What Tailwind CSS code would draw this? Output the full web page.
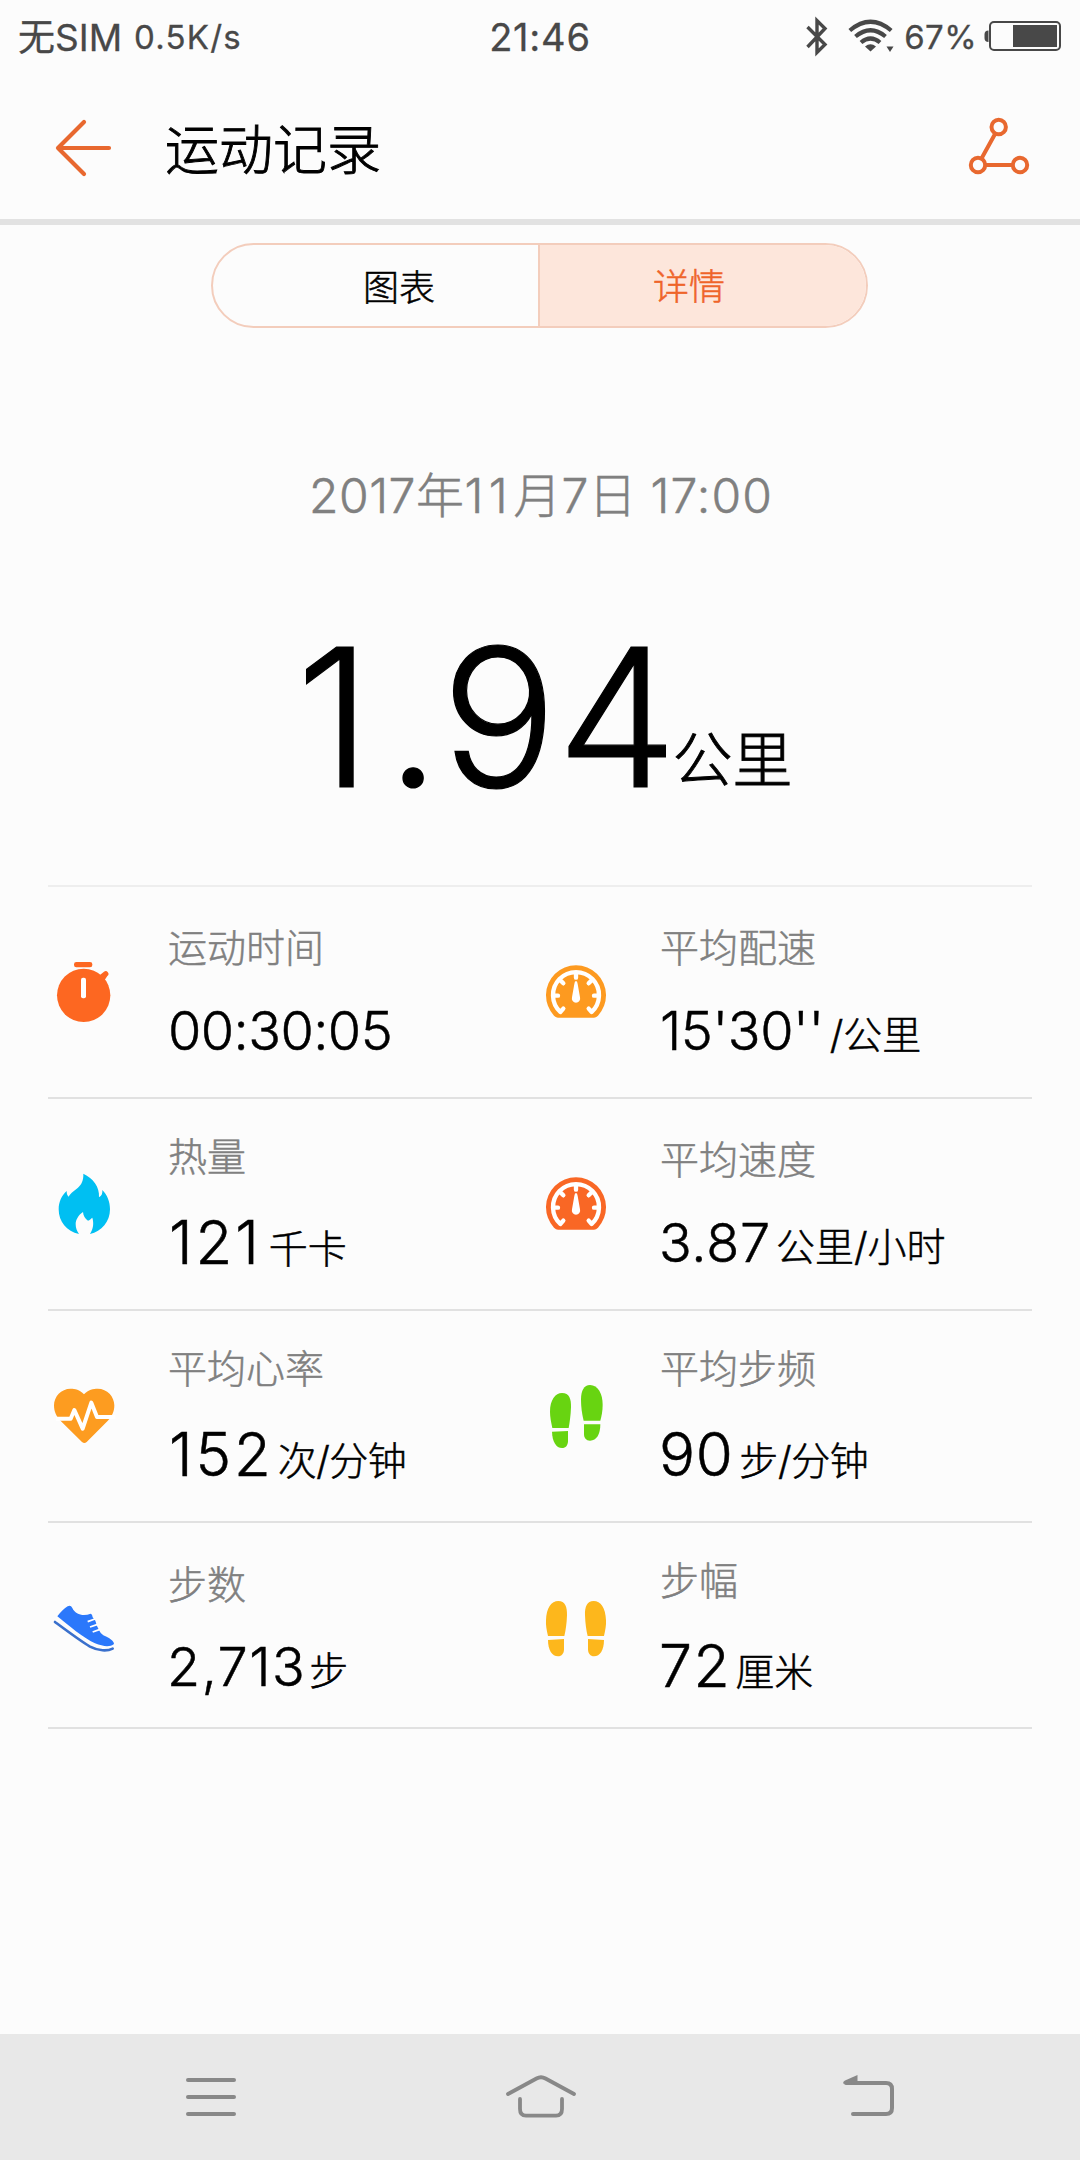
<!DOCTYPE html>
<html lang="zh-CN">
<head>
<meta charset="utf-8">
<title>运动记录</title>
<script src="https://cdn.jsdelivr.net/npm/@tailwindcss/browser@4"></script>
</head>
<body class="flex h-[2160px] w-[1080px] flex-col overflow-hidden bg-[#fcfcfc] font-['Inter','Noto_Sans_CJK_SC',sans-serif] font-light text-black [-webkit-text-stroke:0.5px]">

<!-- Status bar -->
<div class="grid h-[72px] grid-cols-3 font-normal text-[#484848] [-webkit-text-stroke:0.3px]">
  <div class="flex items-baseline pt-[14px] pl-[18px] leading-[48px] whitespace-nowrap">
    <span class="text-[37px]">无SIM</span>
    <span class="ml-[12px] -translate-y-[2px] text-[33px] tracking-[1.2px]">0.5K/s</span>
  </div>
  <div class="pt-[13px] text-center text-[38px] leading-[48px] tracking-[0.8px]">21:46</div>
  <div class="flex items-start justify-end pr-[18px]">
    <svg class="mt-[16px] h-[41px] w-[22px]" viewBox="0 0 22 41" fill="none" stroke="#484848" stroke-width="3.4"><path d="M1.5 11L19 28.500L11 36.500V4.500L19 12.500L1.500 31"/></svg>
    <svg class="mt-[18px] ml-[20px] h-[36px] w-[48px]" viewBox="0 0 48 36" fill="none" stroke="#484848" stroke-width="4.200"><path d="M1.800 12.500Q22.500 -5 43.200 12.500"/><path d="M7.500 18.500Q22.500 6 37.500 18.500"/><path d="M13 24.500Q22.500 16.500 32 24.500"/><path d="M17 28.500Q22.500 24 28 28.500L22.500 33.500Z" fill="#484848" stroke="none"/><path d="M38.500 28.500H45.500L42 34Z" fill="#484848" stroke="none"/></svg>
    <span class="mt-[13px] ml-[8px] text-[33px] leading-[48px] tracking-[0.4px]">67%</span>
    <svg class="mt-[20px] ml-[7px] h-[32px] w-[78px]" viewBox="0 0 78 32"><rect x="6" y="2" width="70" height="28" rx="4" fill="none" stroke="#484848" stroke-width="2"/><rect x="29" y="5" width="44" height="22" fill="#484848"/><path d="M4.500 10.500V22Q0.500 22 0.500 18V14.500Q0.500 10.500 4.500 10.500Z" fill="#484848"/></svg>
  </div>
</div>

<!-- Title bar -->
<header class="flex h-[153px] items-start border-b-[6px] border-[#e2e2e2] pr-[50px] pl-[55px]">
  <svg class="mt-[47px] h-[58px] w-[58px]" viewBox="0 0 58 58" fill="none" stroke="#e8682f" stroke-width="4.200" stroke-linecap="round" stroke-linejoin="round"><path d="M54 29H3M29 3L3 29L29 55"/></svg>
  <h1 class="mt-[49px] ml-[52px] text-[54px] leading-[60px] [-webkit-text-stroke:0.9px]">运动记录</h1>
  <svg class="mt-[44px] ml-auto h-[62px] w-[62px]" viewBox="0 0 62 62" fill="none" stroke="#e8682f" stroke-width="4"><circle cx="30.700" cy="11" r="7.200"/><circle cx="10" cy="49" r="7.200"/><circle cx="52" cy="49" r="7.200"/><path d="M27.300 17.500L13.500 42.500M17 49H45"/></svg>
</header>

<!-- Tabs -->
<div class="mt-[18px] ml-[211px] flex h-[85px] w-[657px] overflow-hidden rounded-full border-2 border-[#f3cdbc] text-[36px] leading-[81px]">
  <div class="w-[327px] border-r-2 border-[#f3cdbc] pt-[3px] pl-[150px]">图表</div>
  <div class="flex-1 bg-[#fde6db] pt-[2px] pl-[113px] text-[#ef6429]">详情</div>
</div>

<!-- Summary -->
<p class="mt-[138px] pl-[2px] text-center text-[48px] leading-[60px] tracking-[1.1px] whitespace-pre text-[#808080]"><span class="tracking-[0.5px]">2017年</span><span class="tracking-[5.5px]">11</span><span class="tracking-[0.2px]">月7日 </span>17:00</p>
<div class="mt-[91px] flex h-[200px] items-baseline pl-[296px] leading-[200px]">
  <span class="text-[192px] [-webkit-text-stroke:1.2px]"><span class="tracking-[14.5px]">1</span><span class="tracking-[1px]">.</span>94</span>
  <span class="-ml-[5px] -translate-y-[5px] text-[60px] [-webkit-text-stroke:0.9px]">公里</span>
</div>

<!-- Metrics -->
<div class="mx-[48px] mt-[68px] border-t-2 border-[#eeeeee]">
  <div class="grid h-[212px] grid-cols-2 border-b-2 border-[#e1e1e1]">
    <div class="flex items-start">
      <svg class="mt-[69px] size-[72px]" viewBox="54 258 216 216" fill="#fd6721"><rect x="132" y="276" width="55" height="16" rx="7"/><circle cx="161" cy="376" r="80"/><path d="M206 318L222 305A8 8 0 0 1 232 318L220 336Z"/><rect x="153" y="323" width="15" height="62" rx="6" fill="#fff"/></svg>
      <div class="pt-[41px] pl-[48px]">
        <div class="text-[39px] leading-[40px] text-[#808080]">运动时间</div>
        <div class="mt-[33px] flex items-baseline leading-[60px]"><span class="text-[54px] tracking-[-0.57px]">00:30:05</span></div>
      </div>
    </div>
    <div class="flex items-start">
      <svg class="mt-[69px] size-[72px]" viewBox="30 258 216 216"><path d="M84 443Q78 443 72 437A90 90 0 1 1 204 437Q198 443 192 443Z" fill="#fd9a20"/><g fill="none" stroke="#fff" stroke-width="13" stroke-linecap="round" stroke-linejoin="round"><path d="M100 416L91 426A69 69 0 1 1 185 426L176 416"/><path d="M138 310V323M90 330L100 340M186 330L176 340M70 377H84M206 377H192"/></g><path d="M138 333Q142 333 143 342L150 382A12.500 12.500 0 1 1 126 382L133 342Q134 333 138 333Z" fill="#fff"/></svg>
      <div class="pt-[41px] pl-[48px]">
        <div class="text-[39px] leading-[40px] text-[#808080]">平均配速</div>
        <div class="mt-[33px] flex items-baseline leading-[60px]"><span class="text-[54px] tracking-[-0.4px]">15'30''</span><span class="ml-[6px] -translate-y-px text-[39px]">/公里</span></div>
      </div>
    </div>
  </div>

  <div class="grid h-[212px] grid-cols-2 border-b-2 border-[#e1e1e1]">
    <div class="flex items-start">
      <svg class="mt-[69px] size-[72px]" viewBox="54 894 216 216" fill="#00bff2"><path d="M160 911C190 926 209 950 207 982C215 978 218 970 217 960C232 975 240 995 240 1018C240 1055 215 1085 180 1092C190 1075 192 1060 187 1043C183 1046 179 1050 174 1052C165 1045 160 1038 159 1026C145 1035 137 1050 137 1062C137 1075 141 1083 147 1092C110 1085 86 1055 86 1018C86 995 95 977 110 963C110 970 111 976 116 980C130 955 162 955 160 911Z"/></svg>
      <div class="pt-[38px] pl-[48px]">
        <div class="text-[39px] leading-[40px] text-[#808080]">热量</div>
        <div class="mt-[35px] ml-px flex items-baseline leading-[60px]"><span class="text-[60px] tracking-[2.9px]">121</span><span class="ml-[7px] -translate-y-px text-[39px]">千卡</span></div>
      </div>
    </div>
    <div class="flex items-start">
      <svg class="mt-[69px] size-[72px]" viewBox="30 258 216 216"><path d="M84 443Q78 443 72 437A90 90 0 1 1 204 437Q198 443 192 443Z" fill="#f96725"/><g fill="none" stroke="#fff" stroke-width="13" stroke-linecap="round" stroke-linejoin="round"><path d="M100 416L91 426A69 69 0 1 1 185 426L176 416"/><path d="M138 310V323M90 330L100 340M186 330L176 340M70 377H84M206 377H192"/></g><path d="M138 333Q142 333 143 342L150 382A12.500 12.500 0 1 1 126 382L133 342Q134 333 138 333Z" fill="#fff"/></svg>
      <div class="pt-[41px] pl-[48px]">
        <div class="text-[39px] leading-[40px] text-[#808080]">平均速度</div>
        <div class="mt-[33px] -ml-px flex items-baseline leading-[60px]"><span class="text-[54px] tracking-[0.8px]">3.87</span><span class="ml-[5px] -translate-y-px text-[39px]">公里/小时</span></div>
      </div>
    </div>
  </div>

  <div class="grid h-[212px] grid-cols-2 border-b-2 border-[#e1e1e1]">
    <div class="flex items-start">
      <svg class="mt-[69px] size-[72px]" viewBox="54 240 216 216"><path d="M162 283C175 268 190 266 203 266C232 266 253 290 253 316C253 335 246 350 232 364L170 426Q163 432 156 426L93 364C79 350 72 335 72 316C72 290 93 266 122 266C135 266 149 268 162 283Z" fill="#fd9c20"/><path d="M78 356H122L133 330L158 386L184 308L201 351H256" fill="none" stroke="#fff" stroke-width="12" stroke-linejoin="round"/></svg>
      <div class="pt-[38px] pl-[48px]">
        <div class="text-[39px] leading-[40px] text-[#808080]">平均心率</div>
        <div class="mt-[35px] ml-px flex items-baseline leading-[60px]"><span class="text-[60px] tracking-[2.9px]">152</span><span class="ml-[4px] -translate-y-px text-[39px] tracking-[-0.5px]">次/分钟</span></div>
      </div>
    </div>
    <div class="flex items-start">
      <svg class="mt-[69px] size-[72px]" viewBox="30 240 216 216" fill="#68d411"><path d="M67 384C63 365 60 350 60 335C60 300 76 279 96 279C118 279 124 297 123 322C122 348 119 368 116 384Z"/><path d="M66 395L114 393V422C114 436 107 444 96 444C78 444 67 424 66 395Z"/><path d="M161 362C156 343 153 322 153 298C153 272 162 255 180 255C204 255 218 282 218 314C218 332 215 347 211 362Z"/><path d="M162 373H211C211 403 200 422 180 422C168 422 162 414 162 402Z"/></svg>
      <div class="pt-[38px] pl-[48px]">
        <div class="text-[39px] leading-[40px] text-[#808080]">平均步频</div>
        <div class="mt-[35px] -ml-px flex items-baseline leading-[60px]"><span class="text-[60px] tracking-[0.6px]">90</span><span class="ml-[6px] -translate-y-px text-[39px] tracking-[-0.4px]">步/分钟</span></div>
      </div>
    </div>
  </div>

  <div class="grid h-[206px] grid-cols-2 border-b-2 border-[#e1e1e1]">
    <div class="flex items-start">
      <svg class="mt-[69px] size-[72px]" viewBox="54 876 216 216"><path d="M82 949Q98 928 113 919Q122 914 127 924C136 944 160 950 182 941Q187 942 188 952L196 962L201 978L207 990Q211 1000 220 1006C238 1014 252 1023 252 1032C240 1042 220 1040 195 1030C160 1014 115 976 82 949Z" fill="#2b78fb"/><path d="M75 966C110 992 150 1022 180 1040C205 1053 232 1054 248 1046" fill="none" stroke="#3a70cc" stroke-width="8" stroke-linecap="round"/><path d="M173 965L195 957M180 981L203 973M188 996L210 988" stroke="#fff" stroke-width="5.500"/></svg>
      <div class="pt-[42px] pl-[48px]">
        <div class="text-[39px] leading-[40px] text-[#808080]">步数</div>
        <div class="mt-[32px] -ml-px flex items-baseline leading-[60px]"><span class="text-[54px] tracking-[1.5px]">2,713</span><span class="ml-[3px] -translate-y-px text-[39px]">步</span></div>
      </div>
    </div>
    <div class="flex items-start">
      <svg class="mt-[69px] size-[72px]" viewBox="30 876 216 216" fill="#fdb71c"><path d="M54 1008C50 990 47 976 48 961C49 924 64 903 85 903C105 903 112 920 111 946C110 972 107 992 103 1008Z"/><path d="M54 1020L102 1017V1048C102 1061 95 1069 84 1069C66 1069 54 1050 54 1020Z"/><path d="M222 1008C226 990 229 976 228 961C227 924 212 903 191 903C171 903 164 920 165 946C166 972 169 992 173 1008Z"/><path d="M222 1020L174 1017V1048C174 1061 181 1069 192 1069C210 1069 222 1050 222 1020Z"/></svg>
      <div class="pt-[38px] pl-[48px]">
        <div class="text-[39px] leading-[40px] text-[#808080]">步幅</div>
        <div class="mt-[35px] -ml-px flex items-baseline leading-[60px]"><span class="text-[59px] tracking-[1.5px]">72</span><span class="ml-[4px] -translate-y-px text-[39px]">厘米</span></div>
      </div>
    </div>
  </div>
</div>

<!-- Navigation bar -->
<nav class="mt-auto flex h-[126px] items-start bg-[#e8e8e8] pt-[38px] pl-[186px]">
  <svg class="h-[48px] w-[50px]" viewBox="0 0 50 48" stroke="#888" stroke-width="4" stroke-linecap="round"><path d="M2 8H48M2 25H48M2 42H48"/></svg>
  <svg class="ml-[270px] h-[48px] w-[70px]" viewBox="0 0 70 48" fill="none" stroke="#888" stroke-width="3.800" stroke-linecap="round"><path d="M2 22L30.500 6.500Q35 4 39.500 6.500L68 22"/><path d="M14 27V37Q14 43.700 20 43.700H50Q56 43.700 56 37V27"/></svg>
  <svg class="ml-[266px] h-[48px] w-[54px]" viewBox="0 0 54 48" fill="none" stroke="#888" stroke-width="4" stroke-linecap="round"><path d="M4 11H44Q50 11 50 17V36Q50 42 44 42H11"/><path d="M1 11.500Q1 9.500 3 8.500L15.500 3V12Z" fill="#888" stroke="none"/></svg>
</nav>
</body>
</html>
